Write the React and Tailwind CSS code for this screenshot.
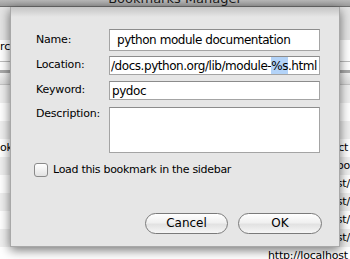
export default function App() {
  const rows = [
    { left: '', right: '' },
    { left: '', right: '' },
    { left: '', right: '' },
    { left: 'ok', right: 'http://localhoct' },
    { left: '', right: 'http://localhobo' },
    { left: '', right: 'http://localhost/' },
    { left: '', right: 'http://localhost/' },
    { left: '', right: 'http://localhost/' },
    { left: '', right: 'http://localhost/' },
    { left: '', right: 'http://localhost' },
  ];

  return (
    <div className="relative w-[350px] h-[259px] overflow-hidden bg-white font-['DejaVu_Sans',sans-serif] text-black">
      {/* background window */}
      <div className="h-[7px] overflow-hidden bg-[linear-gradient(#b8b8b8,#9c9c9c)] border-b border-[#6e6e6e] flex justify-center">
        <span className="text-[13px] leading-[13px] -mt-[8px] text-[#1a1a1a]">Bookmarks Manager</span>
      </div>
      <div className="h-[33px] bg-[#e4e4e4]" />
      <div className="h-[22px] bg-white text-[11px] leading-[12px] pt-[1px] border-b border-[#bdbdbd]">rc</div>
      <div className="h-[11px] bg-white border-b-[3px] border-[#a9a9a9]" />
      <div className="h-[12px] bg-[linear-gradient(#f4f4f4,#dcdcdc)] border-b border-[#c4c4c4]" />
      {rows.map((r, i) => (
        <div
          key={i}
          className={`h-[18px] flex items-center text-[11px] tracking-[-0.2px] ${i % 2 === 0 ? 'bg-[#efefef]' : 'bg-white'}`}
        >
          <div className="w-[268px]">{r.left}</div>
          <div className="whitespace-nowrap">{r.right}</div>
        </div>
      ))}

      {/* sheet */}
      <div className="absolute left-[10px] top-[7px] w-[330px] h-[240px] bg-[#e6e6e6] border-x border-b border-[#a8a8a8] shadow-[0_3px_10px_rgba(0,0,0,0.55)]">
        <div className="absolute inset-x-0 top-0 h-[10px] bg-[linear-gradient(#c4c4c4,rgba(230,230,230,0))]" />
        <div className="relative pt-[22px] pl-[25px] flex flex-col text-[11px] tracking-[-0.2px]">
          <div className="flex items-center h-[22px]">
            <div className="w-[73px]">Name:</div>
            <div className="w-[211px] h-[22px] bg-white border border-[#a4a4a4] border-t-[#8c8c8c] pl-[7px] flex items-center text-[12px] tracking-[-0.45px]">
              python module documentation
            </div>
          </div>
          <div className="flex items-center h-[19px] mt-[5px]">
            <div className="w-[73px]">Location:</div>
            <div className="w-[211px] h-[19px] bg-white border border-[#a4a4a4] border-t-[#8c8c8c] pl-[1px] flex items-center whitespace-nowrap overflow-hidden text-[12px] tracking-[-0.45px]">
              /docs.python.org/lib/module-<span className="bg-[#b3d3f8]">%s</span>.html
            </div>
          </div>
          <div className="flex items-center h-[19px] mt-[6px]">
            <div className="w-[73px]">Keyword:</div>
            <div className="w-[211px] h-[19px] bg-white border border-[#a4a4a4] border-t-[#8c8c8c] pl-[2px] flex items-center text-[12px] tracking-[-0.45px]">
              pydoc
            </div>
          </div>
          <div className="flex items-start mt-[7px]">
            <div className="w-[73px] -mt-[1px]">Description:</div>
            <div className="w-[211px] h-[46px] bg-white border border-[#a4a4a4] border-t-[#8c8c8c]" />
          </div>
          <div className="flex items-center mt-[9px] -ml-[2px] gap-[5px]">
            <div className="w-[14px] h-[14px] rounded-[3px] border border-[#8a8a8a] bg-[linear-gradient(#ffffff,#e2e2e2)]" />
            <span className="text-[11px] tracking-[-0.3px]">Load this bookmark in the sidebar</span>
          </div>
          <div className="flex justify-end gap-[10px] mt-[34px] pr-[17px]">
            <button className="w-[83px] h-[21px] rounded-full border border-[#7a7a7a] bg-[linear-gradient(#ffffff,#f0f0f0_45%,#e2e2e2_55%,#f6f6f6)] text-[12px] tracking-normal leading-none">
              Cancel
            </button>
            <button className="w-[84px] h-[21px] rounded-full border border-[#7a7a7a] bg-[linear-gradient(#ffffff,#f0f0f0_45%,#e2e2e2_55%,#f6f6f6)] text-[12px] tracking-normal leading-none">
              OK
            </button>
          </div>
        </div>
      </div>
    </div>
  );
}
